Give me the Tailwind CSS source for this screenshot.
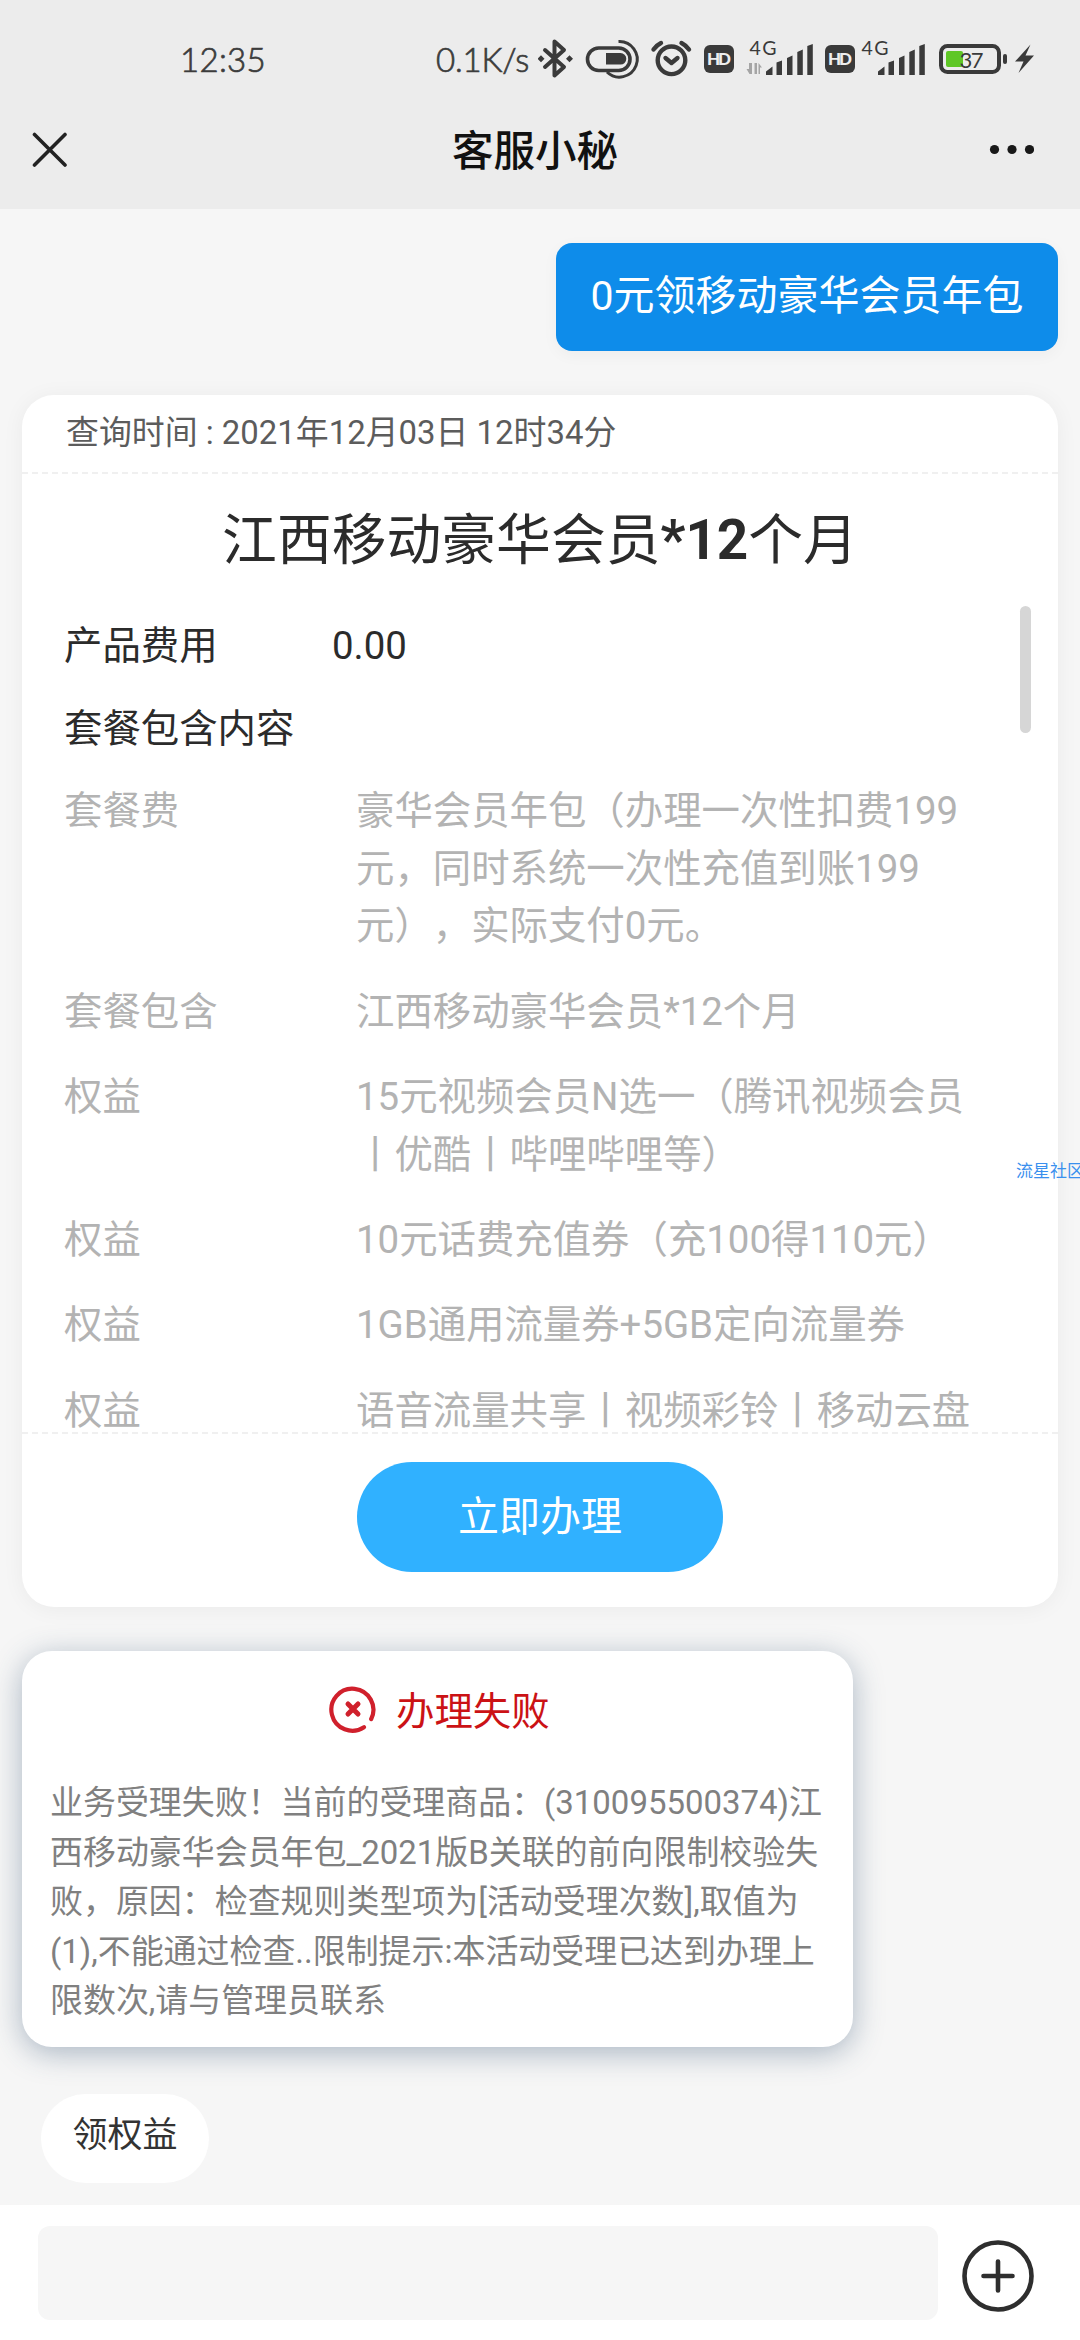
<!DOCTYPE html>
<html lang="zh-CN">
<head>
<meta charset="utf-8">
<title>客服小秘</title>
<script src="https://cdn.jsdelivr.net/npm/@tailwindcss/browser@4"></script>
</head>
<body class="bg-[#f6f6f6]">
<div class="relative flex h-[2340px] w-[1080px] flex-col overflow-hidden bg-[#f6f6f6] font-['Roboto','Noto_Sans_CJK_SC',sans-serif] whitespace-nowrap [text-spacing-trim:space-all]">

  <header class="flex h-[209px] shrink-0 flex-col bg-[#ececec]">
    <!-- status bar -->
    <div class="flex h-[100px] items-start pt-[30px] pl-[180px] font-['Lato',sans-serif] text-[33px] leading-[58px] text-[#3c3c3c]">
      <span class="w-[256px] font-light tracking-[0.3px] [-webkit-text-stroke:0.7px_#3c3c3c]">12:35</span>
      <span class="w-[102px] font-light tracking-[-0.2px] [-webkit-text-stroke:0.7px_#3c3c3c]">0.1K/s</span>
      <svg class="h-[60px] w-[40px]" viewBox="538 30 40 60" fill="none" stroke="#3a3a3a" stroke-width="4" stroke-linejoin="round" stroke-linecap="round">
        <path d="M545 50 564 67 554.500 75.500V41.500L564 50 545 67"/>
        <path d="M541 55.200l3.500 3.500-3.500 3.500-3.500-3.500zM569.500 55.200l3.500 3.500-3.500 3.500-3.500-3.500z" fill="#3a3a3a" stroke="none"/>
      </svg>
      <svg class="h-[60px] w-[66px]" viewBox="578 30 66 60" fill="none" stroke="#3a3a3a" stroke-width="3.6">
        <rect x="587.500" y="48" width="42.500" height="22.500" rx="11.250"/>
        <path d="M606 53h14.500a5.800 5.800 0 0 1 0 11.600H606z" fill="#3a3a3a" stroke="none"/>
        <path d="M618.500 41.500a17.800 17.800 0 1 1-11.500 30.500" stroke-width="3"/>
      </svg>
      <svg class="h-[60px] w-[53px]" viewBox="644 30 53 60" fill="none" stroke="#3a3a3a" stroke-width="4.400" stroke-linecap="round" stroke-linejoin="round">
        <circle cx="671.500" cy="60.300" r="13.800"/>
        <path d="M665.500 58l6 5 6-5M653.500 49.500a20 20 0 0 1 7.500-6.500M689 49.500a20 20 0 0 0-7.500-6.500"/>
      </svg>
      <svg class="h-[60px] w-[48px]" viewBox="697 30 48 60">
        <rect x="704" y="45" width="30" height="28" rx="6" fill="#3a3a3a"/>
        <text x="719" y="65" text-anchor="middle" font-family="Lato" font-weight="900" font-size="17" textLength="24" fill="#eee">HD</text>
      </svg>
      <svg class="h-[60px] w-[73px]" viewBox="745 30 73 60" fill="#3a3a3a">
        <text x="749.500" y="55" font-family="Lato" font-size="19.500" textLength="27">4G</text>
        <path d="M752 63v11h-2.500l-3-5h2.500v-6zM754.500 74V63h2.500v11zM758.500 74V63l3.500 4.500h-2V74z" fill="#a5a5a5"/>
        <path d="M766 75v-3.500l6.500-5V75zM776.500 75V62.500l5.500-2V75zM787 75V58l5.500-2.500V75zM797.300 75V52l5.500-2.500V75zM807.300 75V46l5.500-2V75z"/>
      </svg>
      <svg class="h-[60px] w-[42px]" viewBox="818 30 42 60">
        <rect x="825" y="45" width="30" height="28" rx="6" fill="#3a3a3a"/>
        <text x="840" y="65" text-anchor="middle" font-family="Lato" font-weight="900" font-size="17" textLength="24" fill="#eee">HD</text>
      </svg>
      <svg class="h-[60px] w-[70px]" viewBox="860 30 70 60" fill="#3a3a3a">
        <text x="861.500" y="55" font-family="Lato" font-size="19.500" textLength="27">4G</text>
        <path transform="translate(112 0)" d="M766 75v-3.500l6.500-5V75zM776.500 75V62.500l5.500-2V75zM787 75V58l5.500-2.500V75zM797.300 75V52l5.500-2.500V75zM807.300 75V46l5.500-2V75z"/>
      </svg>
      <svg class="h-[60px] w-[80px]" viewBox="930 30 80 60">
        <rect x="941" y="46" width="58" height="26" rx="6.500" fill="none" stroke="#3a3a3a" stroke-width="4"/>
        <rect x="946" y="51" width="17" height="16" rx="2" fill="#5fc726"/>
        <rect x="1003" y="54" width="4" height="10" rx="2" fill="#3a3a3a"/>
        <text x="959.500" y="67.500" font-family="Lato" font-size="22" textLength="24" fill="#3a3a3a">37</text>
      </svg>
      <svg class="h-[60px] w-[30px]" viewBox="1010 30 30 60" fill="#3a3a3a"><path d="M1030.500 44.500 1015 61.500 1023.500 61.500 1018.500 73 1034 55.500 1025.500 55.500z"/></svg>
    </div>
    <!-- title bar -->
    <div class="flex h-[100px] items-center justify-between pr-[46px] pl-[32px]">
      <svg class="h-9 w-[120px]" viewBox="0 0 120 36" stroke="#222" stroke-width="3.6" stroke-linecap="round"><path d="M2.500 2.500 33 33M33 2.500 2.500 33"/></svg>
      <h1 class="pb-1 pl-[4px] font-['Noto_Sans_CJK_SC',sans-serif] text-[41.500px] leading-[60px] font-medium text-[#111]">客服小秘</h1>
      <svg class="h-9 w-[120px]" viewBox="914 0 120 36" fill="#181818"><circle cx="994.500" cy="17.500" r="4.600"/><circle cx="1012" cy="17.500" r="4.600"/><circle cx="1029.500" cy="17.500" r="4.600"/></svg>
    </div>
  </header>

  <main class="flex h-[1996px] shrink-0 flex-col items-start">
    <div class="mt-[34px] mr-[22px] flex h-[108px] w-[502px] items-center justify-center self-end rounded-2xl bg-[#0e8cea] pb-[3px] text-[41px] leading-[60px] text-white shadow-[0_4px_16px_rgba(0,0,0,0.04)]">0元领移动豪华会员年包</div>

    <!-- offer card -->
    <section class="mt-[44px] ml-[22px] flex h-[1212px] w-[1036px] flex-col rounded-[32px] bg-white shadow-[0_2px_22px_rgba(0,0,0,0.05)]">
      <div class="h-[79px] border-b-2 border-dashed border-[#f0f0f0] pl-[44px] text-[32.900px] leading-[76px] text-[#5c5c5c]">查询时间 : 2021年12月03日 12时34分</div>
      <div class="relative h-[960px] overflow-hidden border-b-2 border-dashed border-[#f0f0f0] pl-[42px]">
        <h2 class="-ml-[42px] pt-[25px] text-center text-[54.800px] leading-[82px] text-[#2b2b2b]">江西移动豪华会员<span class="font-bold">*12</span>个月</h2>
        <div class="mt-[36px] flex text-[38.400px] leading-[58px] text-[#2b2b2b]"><span class="w-[268px]">产品费用</span><span>0.00</span></div>
        <div class="mt-[25px] text-[38.400px] leading-[58px] text-[#2b2b2b]">套餐包含内容</div>
        <dl class="mt-[24px] grid grid-cols-[292px_1fr] gap-y-[27.800px] text-[38.400px] leading-[57.600px] text-[#b3b3b3]">
          <dt>套餐费</dt><dd>豪华会员年包（办理一次性扣费199<br>元，同时系统一次性充值到账199<br>元），实际支付0元。</dd>
          <dt>套餐包含</dt><dd>江西移动豪华会员*12个月</dd>
          <dt>权益</dt><dd>15元视频会员N选一（腾讯视频会员<br>丨优酷丨哔哩哔哩等）</dd>
          <dt>权益</dt><dd>10元话费充值券（充100得110元）</dd>
          <dt>权益</dt><dd>1GB通用流量券+5GB定向流量券</dd>
          <dt>权益</dt><dd>语音流量共享丨视频彩铃丨移动云盘</dd>
        </dl>
        <div class="absolute top-[132px] right-[27px] h-[127px] w-[11px] rounded-full bg-[#d6d6d6]"></div>
      </div>
      <button class="mt-[28px] h-[110px] w-[366px] self-center rounded-full bg-[#30b1ff] text-[41px] leading-[110px] text-white">立即办理</button>
    </section>

    <!-- failure notice -->
    <section class="mt-[44px] ml-[22px] flex h-[396px] w-[831px] flex-col rounded-[30px] bg-white shadow-[0_6px_30px_rgba(45,75,110,0.38)]">
      <div class="mt-[32px] flex h-[58px] items-center pl-[307px] text-[38.400px] leading-[58px] text-[#cb1215]">
        <svg class="mr-[19px] h-[48px] w-[48px] -translate-y-[3px]" viewBox="0 0 48 48" fill="none" stroke="#d0202c" stroke-linecap="round">
          <path d="M42.200 34A21 21 0 1 0 35 42.200" stroke-width="4.200"/>
          <path d="M19 19l10 10M29 19l-10 10" stroke-width="5"/>
        </svg>
        <span>办理失败</span>
      </div>
      <p class="mt-[37px] pl-[28px] text-[32.950px] leading-[49.600px] text-[#808080]">业务受理失败！当前的受理商品：(310095500374)江<br>西移动豪华会员年包_2021版B关联的前向限制校验失<br>败，原因：检查规则类型项为[活动受理次数],取值为<br>(1),不能通过检查..限制提示:本活动受理已达到办理上<br>限数次,请与管理员联系</p>
    </section>

    <div class="mt-[47px] ml-[41px] h-[89px] w-[168px] rounded-full bg-white text-center text-[35px] leading-[83px] text-[#333]">领权益</div>
  </main>

  <footer class="flex flex-1 items-start bg-white pt-[21px] pl-[38px]">
    <div class="h-[94px] w-[900px] rounded-[12px] bg-[#f6f6f6]"></div>
    <svg class="mt-[12px] ml-[22px] h-[76px] w-[76px]" viewBox="0 0 76 76" fill="none" stroke="#2e2e2e" stroke-width="4.600" stroke-linecap="round"><circle cx="38" cy="38" r="33.500"/><path d="M38 23.500v29M23.500 38h29"/></svg>
  </footer>

  <div class="absolute top-[1157px] left-[1016px] font-['Noto_Sans_CJK_SC',sans-serif] text-[17px] leading-[26px] text-[#3a90ee]">流星社区</div>
</div>
</body>
</html>
